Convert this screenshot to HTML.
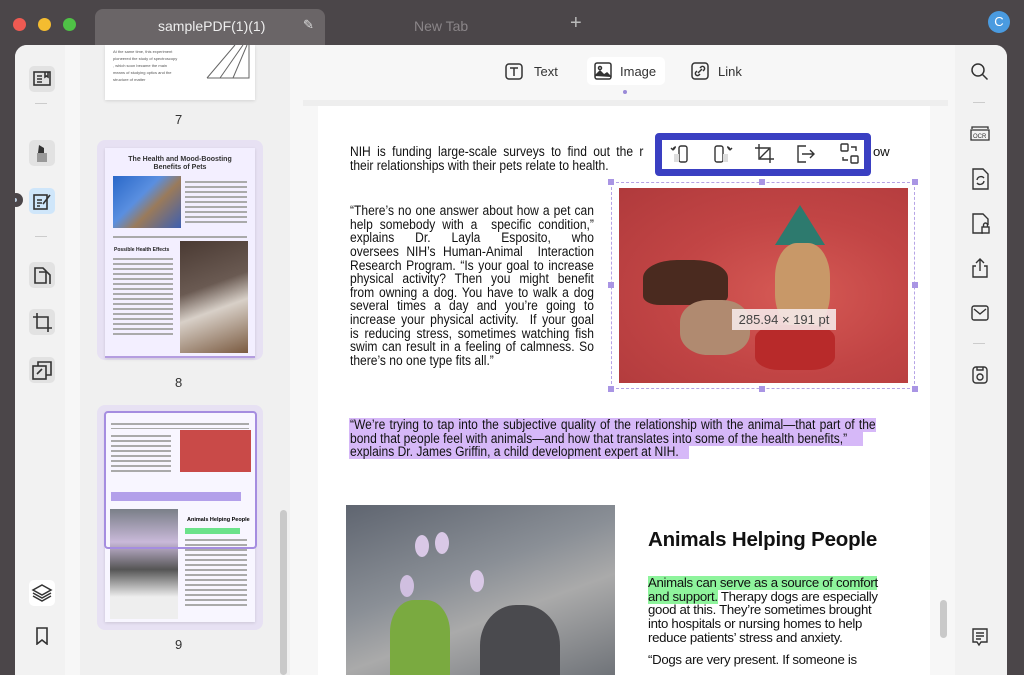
<!DOCTYPE html>
<html><head><meta charset="utf-8"><style>
*{margin:0;padding:0;box-sizing:border-box}
body{width:1024px;height:661px;overflow:hidden;background:#4b4649;font-family:"Liberation Sans",Arial,sans-serif;position:relative}
.abs{position:absolute}
.dot{position:absolute;top:18px;width:13px;height:13px;border-radius:50%}
.win{position:absolute;left:15px;top:45px;width:992px;height:630px;background:#f7f7f7;border-radius:12px 12px 0 0;overflow:hidden}
.ico{position:absolute;width:26px;height:26px;border-radius:5px;background:#e2e2e2}
.rico svg,.ico svg{position:absolute}
.thumb{position:absolute;background:#fff;box-shadow:0 1px 3px rgba(0,0,0,.12)}
.pt{font-size:13.2px;line-height:13.65px;color:#111;position:absolute;letter-spacing:-0.15px}
.pt div{white-space:nowrap}
.j{font-size:13.4px;letter-spacing:0;transform:scaleX(0.9);transform-origin:0 0}
.j div{text-align:justify;text-align-last:justify;white-space:nowrap;height:13.65px}
.j div.l{text-align-last:left}
.tl{height:2px;background:#aaa;margin:3px 0}
</style></head><body>
<div class="dot" style="left:13px;background:#ee5a52"></div>
<div class="dot" style="left:38px;background:#f4bc30"></div>
<div class="dot" style="left:63px;background:#4fc246"></div>
<div class="abs" style="left:95px;top:9px;width:230px;height:36px;background:#6a6567;border-radius:8px 8px 0 0"></div>
<div class="abs" style="left:158px;top:18px;color:#eee;font-size:14px">samplePDF(1)(1)</div>
<div class="abs" style="left:303px;top:17px;color:#ddd;font-size:13px">✎</div>
<div class="abs" style="left:414px;top:18px;color:#8a8588;font-size:14px">New Tab</div>
<div class="abs" style="left:570px;top:12px;color:#bbb;font-size:20px">+</div>
<div class="abs" style="left:988px;top:11px;width:22px;height:22px;border-radius:50%;background:#4a9be0;color:#fff;font-size:13px;text-align:center;line-height:22px">C</div>

<div class="win">
 <div class="abs" style="left:0;top:0;width:50px;height:630px;background:#f2f2f2"></div>
 <div class="abs" style="left:65px;top:0;width:210px;height:630px;background:#f0f0f0"></div>
 <div class="abs" style="left:-6px;top:148px;width:14px;height:14px;border-radius:50%;background:#4b4649"></div>
 <div class="abs" style="left:-2px;top:153px;width:4px;height:4px;border-radius:50%;background:#bcd"></div>
 <div class="ico" style="left:14px;top:21px"><svg width="26" height="26" viewBox="0 0 26 26" fill="none" stroke="#333" stroke-width="1.6"><rect x="5" y="6" width="16" height="13"/><path d="M8 10h5M8 13h5M8 16h5M16 6v5l1.5-1 1.5 1V6"/></svg></div>
 <div class="abs" style="left:20px;top:58px;width:12px;height:1px;background:#ccc"></div>
 <div class="ico" style="left:14px;top:95px"><svg width="26" height="26" viewBox="0 0 26 26"><path d="M10 5l5 3v5H9z" fill="#333"/><rect x="8" y="13" width="10" height="9" fill="#999"/></svg></div>
 <div class="ico" style="left:14px;top:143px;background:#cfe6fa"><svg width="26" height="26" viewBox="0 0 26 26" fill="none" stroke="#333" stroke-width="1.6"><rect x="5" y="7" width="13" height="14"/><path d="M8 12h5M8 15h5M8 18h3M14 16l7-9"/></svg></div>
 <div class="abs" style="left:20px;top:191px;width:12px;height:1px;background:#ccc"></div>
 <div class="ico" style="left:14px;top:217px"><svg width="26" height="26" viewBox="0 0 26 26" fill="none" stroke="#333" stroke-width="1.6"><path d="M6 6h8l3 3v12H6z"/><path d="M10 10h8l3 3v9"/></svg></div>
 <div class="ico" style="left:14px;top:264px"><svg width="26" height="26" viewBox="0 0 26 26" fill="none" stroke="#333" stroke-width="1.6"><path d="M8 4v15h15M4 8h15v15"/></svg></div>
 <div class="ico" style="left:14px;top:312px"><svg width="26" height="26" viewBox="0 0 26 26" fill="none" stroke="#333" stroke-width="1.6"><rect x="4" y="9" width="13" height="13"/><path d="M9 9V5h13v13h-5M8 17l5-5"/></svg></div>
 <div class="ico" style="left:14px;top:535px;background:#fff"><svg width="26" height="26" viewBox="0 0 26 26" fill="none" stroke="#333" stroke-width="1.5"><path d="M13 5l9 5-9 5-9-5zM4 13l9 5 9-5M4 16l9 5 9-5"/></svg></div>
 <svg class="abs" style="left:20px;top:582px" width="14" height="18" viewBox="0 0 14 18" fill="none" stroke="#333" stroke-width="1.6"><path d="M2 1h10v16l-5-4-5 4z"/></svg>

 <div class="thumb" style="left:90px;top:0;width:150px;height:55px;padding:3px 8px;font-size:4px;color:#555;line-height:7px">At the same time, this experiment<br>pioneered the study of spectroscopy<br>, which soon became the main<br>means of studying optics and the<br>structure of matter
  <svg class="abs" style="left:100px;top:0" width="46" height="35"><path d="M2 33L30 0M15 33L38 0M28 33L42 0M2 33h42V0" stroke="#666" fill="none"/></svg></div>
 <div class="abs" style="left:160px;top:67px;font-size:13px;color:#333">7</div>
 <div class="abs" style="left:82px;top:95px;width:166px;height:220px;background:#e7e1f3;border-radius:8px"></div>
 <div class="thumb" style="left:90px;top:103px;width:150px;height:210px;background:#f3efff;border-bottom:2px solid #b49de0">
  <div style="text-align:center;font-size:7px;font-weight:bold;color:#333;margin-top:8px;line-height:8px">The Health and Mood-Boosting<br>Benefits of Pets</div>
  <div class="abs" style="left:8px;top:28px;width:68px;height:52px;background:linear-gradient(135deg,#2a68c8,#5a8fe0 40%,#9a7a5a 60%,#3e5fb0)"></div>
  <div class="abs" style="left:80px;top:30px;width:62px"><div class="tl"></div><div class="tl"></div><div class="tl"></div><div class="tl"></div><div class="tl"></div><div class="tl"></div><div class="tl"></div><div class="tl"></div><div class="tl"></div></div>
  <div class="abs" style="left:8px;top:85px;width:134px"><div class="tl"></div></div>
  <div class="abs" style="left:9px;top:99px;font-size:5px;font-weight:bold;color:#222">Possible Health Effects</div>
  <div class="abs" style="left:8px;top:107px;width:60px"><div class="tl"></div><div class="tl"></div><div class="tl"></div><div class="tl"></div><div class="tl"></div><div class="tl"></div><div class="tl"></div><div class="tl"></div><div class="tl"></div><div class="tl"></div><div class="tl"></div><div class="tl"></div><div class="tl"></div><div class="tl"></div><div class="tl"></div><div class="tl"></div></div>
  <div class="abs" style="left:75px;top:93px;width:68px;height:112px;background:linear-gradient(160deg,#4a3a33,#6a5a52 40%,#d8d0c8 60%,#7a5a40)"></div>
 </div>
 <div class="abs" style="left:160px;top:330px;font-size:13px;color:#333">8</div>
 <div class="abs" style="left:82px;top:360px;width:166px;height:225px;background:#e7e1f3;border-radius:8px"></div>
 <div class="thumb" style="left:90px;top:367px;width:150px;height:210px;background:#f8f6ff">
  <div class="abs" style="left:6px;top:8px;width:138px"><div class="tl" style="height:1.5px"></div><div class="tl" style="height:1.5px"></div></div>
  <div class="abs" style="left:6px;top:20px;width:60px"><div class="tl"></div><div class="tl"></div><div class="tl"></div><div class="tl"></div><div class="tl"></div><div class="tl"></div><div class="tl"></div><div class="tl"></div></div>
  <div class="abs" style="left:75px;top:18px;width:71px;height:42px;background:#c94a48"></div>
  <div class="abs" style="left:6px;top:80px;width:130px;height:9px;background:#b3a0ea"></div>
  <div class="abs" style="left:5px;top:97px;width:68px;height:110px;background:linear-gradient(180deg,#7a7f88,#c9b9d9 30%,#555 55%,#eee 80%)"></div>
  <div class="abs" style="left:82px;top:105px;font-size:5.5px;font-weight:bold">Animals Helping People</div>
  <div class="abs" style="left:80px;top:116px;width:55px;height:6px;background:#6be28a"></div>
  <div class="abs" style="left:80px;top:124px;width:62px"><div class="tl"></div><div class="tl"></div><div class="tl"></div><div class="tl"></div><div class="tl"></div><div class="tl"></div><div class="tl"></div><div class="tl"></div><div class="tl"></div><div class="tl"></div><div class="tl"></div><div class="tl"></div><div class="tl"></div><div class="tl"></div></div>
 </div>
 <div class="abs" style="left:89px;top:366px;width:153px;height:138px;border:2px solid #a58de0;border-radius:4px"></div>
 <div class="abs" style="left:160px;top:592px;font-size:13px;color:#333">9</div>
 <div class="abs" style="left:265px;top:465px;width:7px;height:165px;background:#c9c9c9;border-radius:4px"></div>

 <div class="abs" style="left:275px;top:0;width:665px;height:630px;background:#f7f7f7"></div>
 <svg class="abs" style="left:489px;top:16px" width="20" height="20" viewBox="0 0 20 20" fill="none" stroke="#333" stroke-width="1.5"><rect x="2" y="3" width="16" height="15" rx="3"/><path d="M6 7h8M10 7v8"/></svg>
 <div class="abs" style="left:519px;top:19px;font-size:13px;color:#333">Text</div>
 <div class="abs" style="left:572px;top:12px;width:78px;height:28px;background:#fff;border-radius:5px"></div>
 <svg class="abs" style="left:578px;top:16px" width="20" height="20" viewBox="0 0 20 20" fill="none" stroke="#333" stroke-width="1.5"><rect x="2" y="2" width="16" height="16" rx="2"/><circle cx="7" cy="7" r="1.5"/><path d="M2 15l5-5 4 4 3-2 4 4" fill="#333"/></svg>
 <div class="abs" style="left:605px;top:19px;font-size:13px;color:#333">Image</div>
 <div class="abs" style="left:608px;top:45px;width:4px;height:4px;border-radius:50%;background:#9a8ad8"></div>
 <svg class="abs" style="left:675px;top:16px" width="20" height="20" viewBox="0 0 20 20" fill="none" stroke="#333" stroke-width="1.5"><rect x="2" y="2" width="16" height="16" rx="3"/><path d="M8 12l4-4M7 10l-1 1a2 2 0 003 3l1-1M13 10l1-1a2 2 0 00-3-3l-1 1"/></svg>
 <div class="abs" style="left:703px;top:19px;font-size:13px;color:#333">Link</div>

 <div class="abs" style="left:288px;top:55px;width:645px;height:6px;background:#eee"></div>
 <div class="abs" style="left:303px;top:61px;width:612px;height:580px;background:#fff"></div>
 <div class="abs" style="left:925px;top:555px;width:7px;height:38px;background:#c9c9c9;border-radius:4px"></div>

 <div class="pt j" style="left:335px;top:100px;width:326px"><div>NIH is funding large-scale surveys to find out the r</div><div class="l">their relationships with their pets relate to health.</div></div>
 <div class="pt" style="left:858px;top:100px">ow</div>
 <div class="pt j" style="left:335px;top:159px;width:271px">
  <div>“There’s no one answer about how a pet can</div>
  <div>help somebody with a&nbsp; specific condition,”</div>
  <div>explains Dr. Layla Esposito, who</div>
  <div>oversees NIH’s Human-Animal&nbsp; Interaction</div>
  <div>Research Program. “Is your goal to increase</div>
  <div>physical activity? Then you might benefit</div>
  <div>from owning a dog. You have to walk a dog</div>
  <div>several times a day and you’re going to</div>
  <div>increase your physical activity.&nbsp; If your goal</div>
  <div>is reducing stress, sometimes watching fish</div>
  <div>swim can result in a feeling of calmness. So</div>
  <div class="l">there’s no one type fits all.”</div>
 </div>

 <div class="abs" style="left:596px;top:137px;width:304px;height:207px;border:1.5px dashed #b5a3e6"></div>
 <div class="abs" style="left:604px;top:143px;width:289px;height:195px;background:radial-gradient(ellipse at 60% 55%,#d65a55,#c24545 50%,#b03a3c)"></div>
 <div class="abs" style="left:628px;top:215px;width:85px;height:45px;background:#4a2a1f;border-radius:40% 40% 20% 20%"></div>
 <div class="abs" style="left:665px;top:255px;width:70px;height:55px;background:#b08a70;border-radius:40%"></div>
 <div class="abs" style="left:760px;top:160px;width:50px;height:40px;background:#2d7a6e;clip-path:polygon(50% 0,100% 100%,0 100%)"></div>
 <div class="abs" style="left:760px;top:198px;width:55px;height:85px;background:#c89868;border-radius:40%"></div>
 <div class="abs" style="left:740px;top:280px;width:80px;height:45px;background:#b82a2a;border-radius:30%"></div>
 <div class="abs" style="left:717px;top:264px;width:104px;height:21px;background:rgba(245,232,232,.9);font-size:13px;color:#444;text-align:center;line-height:21px">285.94 × 191 pt</div>
 <div class="abs" style="left:593px;top:134px;width:6px;height:6px;background:#a995e4"></div>
 <div class="abs" style="left:744px;top:134px;width:6px;height:6px;background:#a995e4"></div>
 <div class="abs" style="left:897px;top:134px;width:6px;height:6px;background:#a995e4"></div>
 <div class="abs" style="left:593px;top:237px;width:6px;height:6px;background:#a995e4"></div>
 <div class="abs" style="left:897px;top:237px;width:6px;height:6px;background:#a995e4"></div>
 <div class="abs" style="left:593px;top:341px;width:6px;height:6px;background:#a995e4"></div>
 <div class="abs" style="left:744px;top:341px;width:6px;height:6px;background:#a995e4"></div>
 <div class="abs" style="left:897px;top:341px;width:6px;height:6px;background:#a995e4"></div>

 <div class="abs" style="left:640px;top:88px;width:216px;height:43px;background:#fff;border:7px solid #3a3fc2;border-radius:4px"></div>
 <svg class="abs" style="left:655px;top:95px" width="200" height="28" viewBox="0 0 200 28" fill="none" stroke="#333" stroke-width="1.4">
  <path d="M6 7a3 3 0 00-3 3M3 10l-2-2M3 10l2-2"/><rect x="9" y="6" width="8" height="16" rx="2"/><rect x="4" y="14" width="5" height="8" fill="#ddd" stroke="none"/>
  <rect x="45" y="6" width="8" height="16" rx="2"/><path d="M57 7a3 3 0 013 3M60 10l-2-2M60 10l2-2"/><rect x="53" y="14" width="5" height="8" fill="#ddd" stroke="none"/>
  <path d="M89 4v15h15M85 8h15v15M90 18l9-9"/>
  <path d="M136 6h-8v16h8M132 14h12M140 10l4 4-4 4"/>
  <rect x="171" y="4" width="7" height="7" rx="1"/><rect x="181" y="16" width="7" height="7" rx="1"/><path d="M181 7h5v4M178 20h-5v-3"/>
 </svg>

 <div class="abs" style="left:334px;top:373px;width:527px;height:14px;background:#d6b8f8"></div>
 <div class="abs" style="left:334px;top:387px;width:514px;height:14px;background:#d6b8f8"></div>
 <div class="abs" style="left:334px;top:400px;width:340px;height:14px;background:#d6b8f8"></div>
 <div class="pt j" style="left:335px;top:373px;width:584px">
  <div>“We’re trying to tap into the subjective quality of the relationship with the animal—that part of the</div>
  <div class="l">bond that people feel with animals—and how that translates into some of the health benefits,”</div>
  <div class="l">explains Dr. James Griffin, a child development expert at NIH.</div>
 </div>

 <div class="abs" style="left:331px;top:460px;width:269px;height:180px;background:linear-gradient(160deg,#5f6570 0%,#8a8f96 40%,#aaa 60%,#6a6e74)"></div>
 <div class="abs" style="left:400px;top:490px;width:14px;height:22px;background:#d9c8e6;border-radius:50%"></div>
 <div class="abs" style="left:420px;top:487px;width:14px;height:22px;background:#d9c8e6;border-radius:50%"></div>
 <div class="abs" style="left:385px;top:530px;width:14px;height:22px;background:#d0bfe0;border-radius:50%"></div>
 <div class="abs" style="left:455px;top:525px;width:14px;height:22px;background:#d9c8e6;border-radius:50%"></div>
 <div class="abs" style="left:375px;top:555px;width:60px;height:80px;background:#7aaa40;border-radius:40% 40% 0 0"></div>
 <div class="abs" style="left:465px;top:560px;width:80px;height:90px;background:#4a4a4e;border-radius:45% 45% 0 0"></div>

 <div class="abs" style="left:633px;top:483px;font-size:20.5px;font-weight:bold;color:#111;letter-spacing:-0.2px">Animals Helping People</div>
 <div class="abs" style="left:633px;top:531px;width:229px;height:14px;background:#8ef49c"></div>
 <div class="abs" style="left:633px;top:545px;width:70px;height:14px;background:#8ef49c"></div>
 <div class="pt" style="left:633px;top:531px;letter-spacing:-0.3px">
  <div>Animals can serve as a source of comfort</div>
  <div>and support. Therapy dogs are especially</div>
  <div>good at this. They’re sometimes brought</div>
  <div>into hospitals or nursing homes to help</div>
  <div>reduce patients’ stress and anxiety.</div>
 </div>
 <div class="pt" style="left:633px;top:608px;letter-spacing:-0.3px">“Dogs are very present. If someone is</div>

 <div class="abs" style="left:940px;top:0;width:52px;height:630px;background:#f2f2f2"></div>
 <svg class="abs" style="left:955px;top:17px" width="20" height="20" fill="none" stroke="#333" stroke-width="1.5"><circle cx="8" cy="8" r="6"/><path d="M12.5 12.5l5 5"/></svg>
 <div class="abs" style="left:958px;top:57px;width:12px;height:1px;background:#ccc"></div>
 <svg class="abs" style="left:954px;top:78px" width="22" height="22" fill="none" stroke="#333" stroke-width="1.3"><path d="M3 6V4h16v2M2 7h18v10H2z"/><text x="4" y="15" font-size="6" font-family="Liberation Sans" fill="#333" stroke="none">OCR</text></svg>
 <svg class="abs" style="left:956px;top:122px" width="20" height="24" fill="none" stroke="#333" stroke-width="1.4"><path d="M2 2h10l5 5v15H2z"/><path d="M6 13a4 4 0 017-2M13 14a4 4 0 01-7 2"/></svg>
 <svg class="abs" style="left:956px;top:167px" width="20" height="24" fill="none" stroke="#333" stroke-width="1.4"><path d="M12 21H2V2h10l5 5v6"/><rect x="11" y="15" width="7" height="6"/><path d="M12.5 15v-2a2 2 0 014 0v2"/></svg>
 <svg class="abs" style="left:955px;top:212px" width="20" height="22" fill="none" stroke="#333" stroke-width="1.4"><path d="M6 9H3v11h14V9h-3M10 14V2M6 6l4-4 4 4"/></svg>
 <svg class="abs" style="left:955px;top:258px" width="20" height="20" fill="none" stroke="#333" stroke-width="1.4"><rect x="2" y="3" width="16" height="14" rx="2"/><path d="M4 6l6 5 6-5"/></svg>
 <div class="abs" style="left:958px;top:298px;width:12px;height:1px;background:#ccc"></div>
 <svg class="abs" style="left:956px;top:320px" width="18" height="20" fill="none" stroke="#333" stroke-width="1.4"><rect x="2" y="2" width="14" height="16" rx="3"/><circle cx="9" cy="12" r="3"/><path d="M6 2v3h6V2"/></svg>
 <svg class="abs" style="left:955px;top:582px" width="20" height="20" fill="none" stroke="#333" stroke-width="1.4"><path d="M3 2h14v13h-6l-2 3-2-3H3z"/><path d="M6 6h8M6 9h8M6 12h5"/></svg>
</div>
<div class="abs" style="left:1007px;top:45px;width:17px;height:616px;background:#4b4649"></div>
</body></html>
